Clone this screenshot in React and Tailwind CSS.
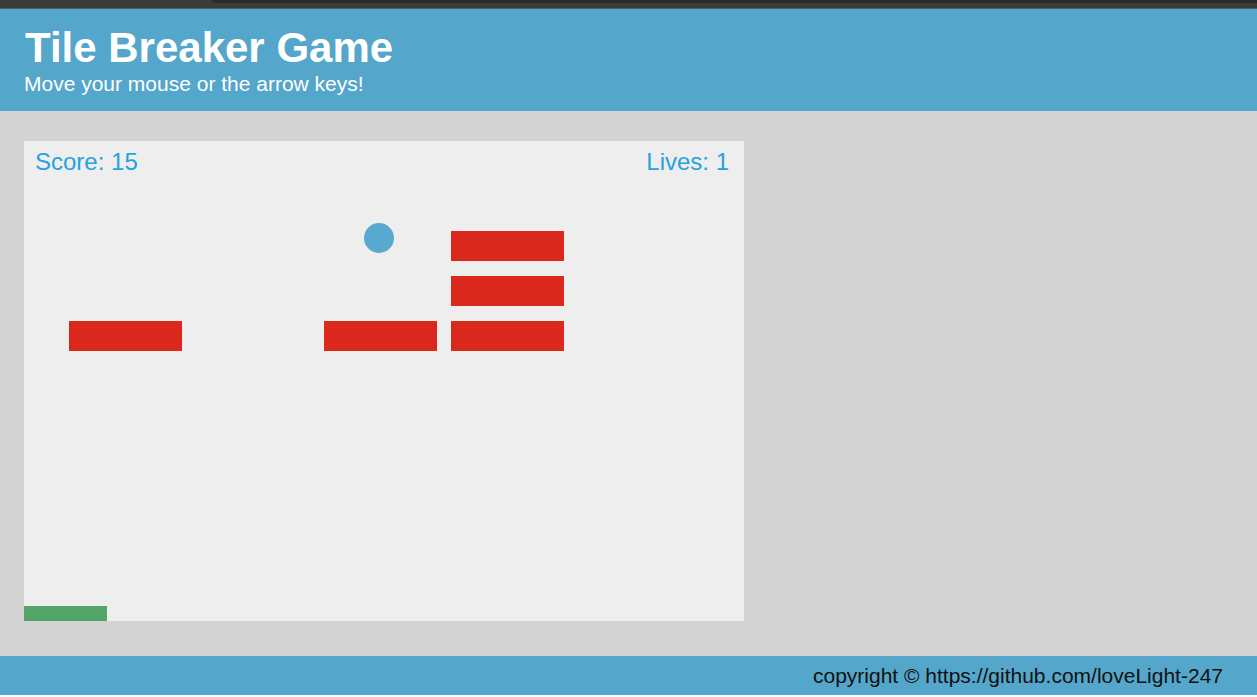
export default function App() {
  const bricks = [
    { x: 45, y: 180 },
    { x: 300, y: 180 },
    { x: 427, y: 90 },
    { x: 427, y: 135 },
    { x: 427, y: 180 },
  ];
  return (
    <div className="min-h-[697px] w-[1257px] bg-white font-['Liberation_Sans',Arial,sans-serif]">
      <div className="relative h-[9px] bg-[#3b3b3b]">
        <div className="ml-[212px] h-[3px] rounded-bl-[3px] bg-[#2c2c2c]" />
        <div className="absolute bottom-0 left-0 right-0 h-px bg-[#575757]" />
      </div>
      <header className="bg-[#54a6cb] px-[24px] py-[15px] text-white">
        <h1 className="pl-[1px] text-[42px] font-bold leading-[48px]">Tile Breaker Game</h1>
        <p className="text-[21px] leading-[24px]">Move your mouse or the arrow keys!</p>
      </header>
      <main className="bg-[#d3d3d3] pb-[35px] pl-[24px] pt-[30px]">
        <div className="relative h-[480px] w-[720px] overflow-hidden bg-[#eeeeee]">
          <div className="flex justify-between pl-[11px] pr-[15px] pt-[9px] text-[24px] leading-[24px] text-[#26a2e2]">
            <span>Score: 15</span>
            <span>Lives: 1</span>
          </div>
          <div className="absolute left-[340px] top-[82px] h-[30px] w-[30px] rounded-full bg-[#57a9cf]" />
          {bricks.map((b, i) => (
            <div
              key={i}
              className="absolute h-[30px] w-[113px] bg-[#da281d]"
              style={{ left: b.x, top: b.y }}
            />
          ))}
          <div className="absolute bottom-0 left-0 h-[15px] w-[83px] bg-[#52a467]" />
        </div>
      </main>
      <footer className="flex h-[39px] items-center justify-end bg-[#54a6cb] pr-[34px] text-[21px] text-[#111111]">
        copyright © https://github.com/loveLight-247
      </footer>
    </div>
  );
}
